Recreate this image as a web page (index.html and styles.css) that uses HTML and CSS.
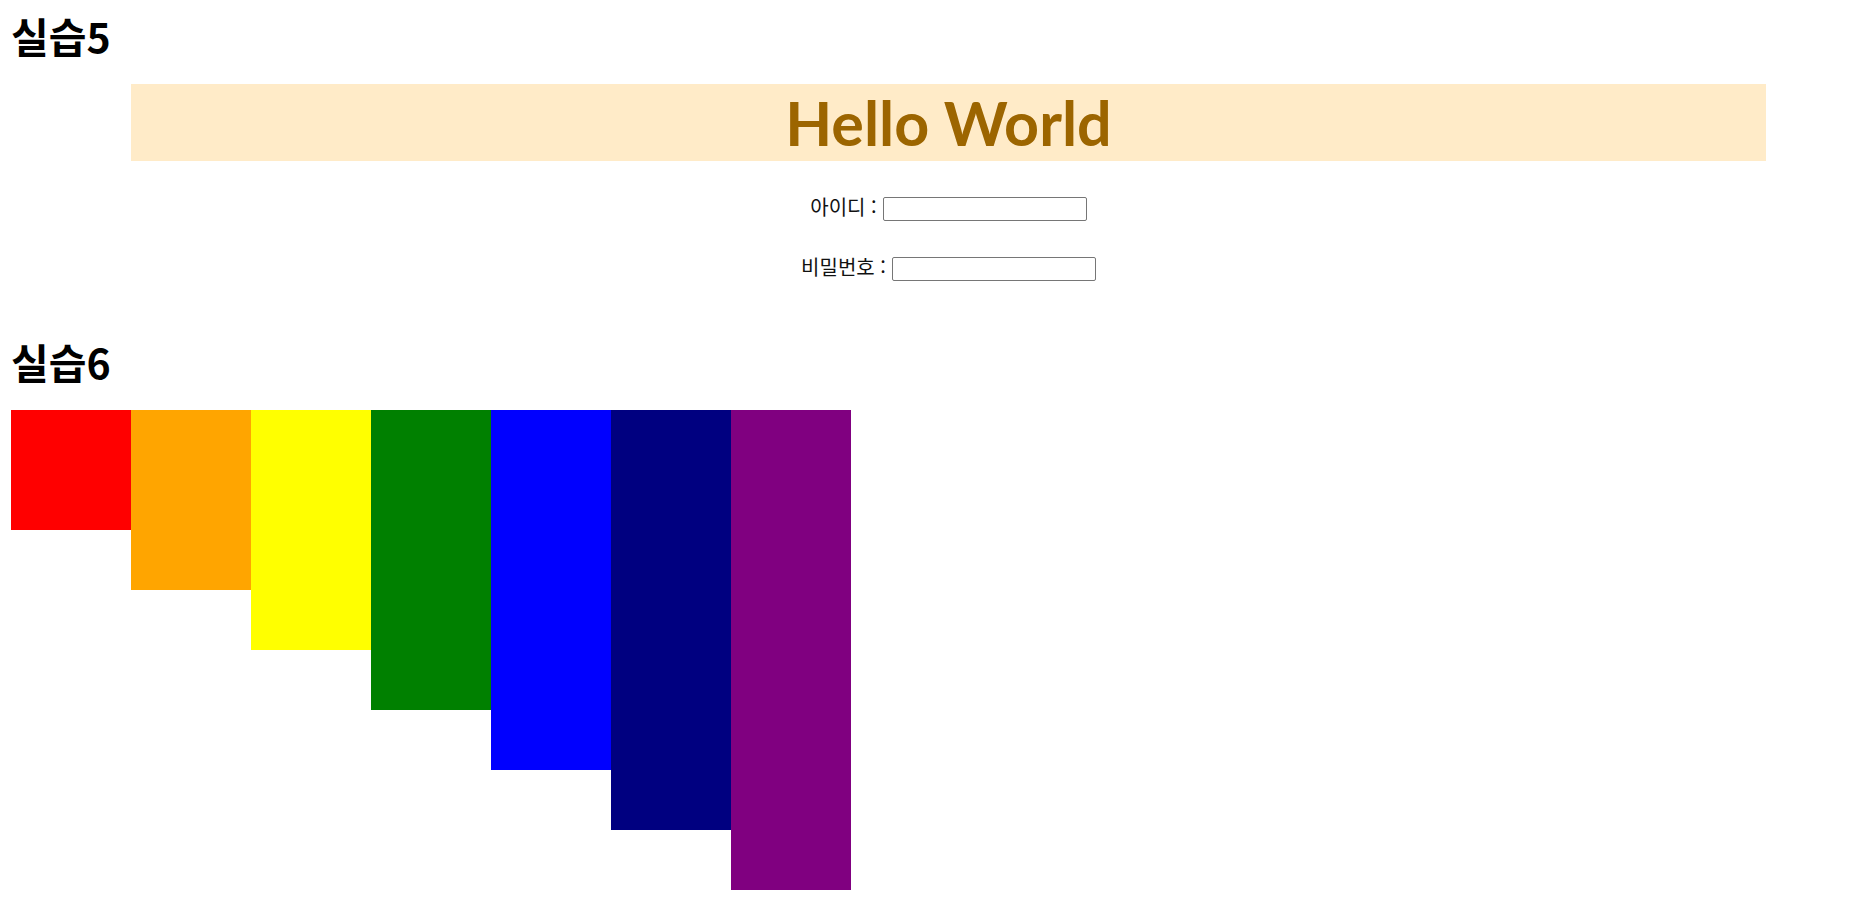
FILE: index.html
```html
<!DOCTYPE html>
<html lang="ko">
<head>
<meta charset="utf-8">
<title>실습</title>
<link rel="stylesheet" href="styles.css">
</head>
<body>
  <h1 class="title title-first">실습5</h1>
  <section class="practice5">
    <div class="banner">Hello World</div>
    <form class="login">
      <label class="row"><span class="label-text">아이디 :</span><input type="text" class="field"></label>
      <label class="row"><span class="label-text">비밀번호 :</span><input type="password" class="field"></label>
    </form>
  </section>
  <h1 class="title title-second">실습6</h1>
  <div class="rainbow">
    <div class="bar red"></div>
    <div class="bar orange"></div>
    <div class="bar yellow"></div>
    <div class="bar green"></div>
    <div class="bar blue"></div>
    <div class="bar navy"></div>
    <div class="bar purple"></div>
  </div>
</body>
</html>
```

FILE: styles.css
```css
html, body {
  margin: 0;
  padding: 0;
  background: #fff;
}
body {
  padding: 0 0 0 11px;
  font-family: "Noto Sans CJK KR", "Noto Sans", sans-serif;
  color: #000;
}
.title {
  margin: 0;
  font-size: 41px;
  line-height: 46px;
  font-weight: 700;
}
.title-first {
  margin-top: 12px;
}
.practice5 {
  margin: 26px 98px 0 120px;
  text-align: center;
}
.banner {
  background: #ffebc8;
  height: 77px;
  line-height: 77px;
  font-family: Lato, "Noto Sans", sans-serif;
  font-weight: 700;
  font-size: 61px;
  color: #9c6500;
}
.login {
  margin-top: 36px;
  display: flex;
  flex-direction: column;
  align-items: center;
  gap: 36px;
}
.row {
  display: flex;
  align-items: center;
  gap: 6px;
  height: 24px;
  font-size: 20px;
  color: #111;
}
.label-text {
  padding-bottom: 5px;
}
.field {
  box-sizing: border-box;
  width: 204px;
  height: 24px;
  margin: 0;
  border: 1px solid #767676;
  border-radius: 2px;
  padding: 1px 2px;
  background: #fff;
}
.title-second {
  margin-top: 57px;
}
.rainbow {
  margin-top: 26px;
  display: flex;
  align-items: flex-start;
}
.bar {
  width: 120px;
}
.red { background: #ff0000; height: 120px; }
.orange { background: #ffa500; height: 180px; }
.yellow { background: #ffff00; height: 240px; }
.green { background: #008000; height: 300px; }
.blue { background: #0000ff; height: 360px; }
.navy { background: #000080; height: 420px; }
.purple { background: #800080; height: 480px; }
```
